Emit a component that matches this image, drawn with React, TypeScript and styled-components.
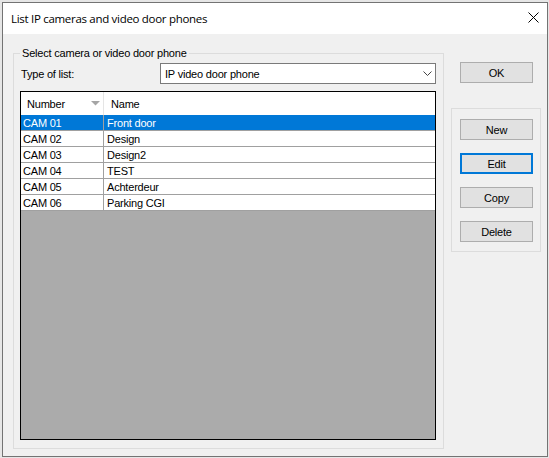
import styled, { createGlobalStyle, css } from 'styled-components';

interface Icamera {
    number: string;
    name: string;
}

const cameras: Icamera[] = [
    { number: 'CAM 01', name: 'Front door' },
    { number: 'CAM 02', name: 'Design' },
    { number: 'CAM 03', name: 'Design2' },
    { number: 'CAM 04', name: 'TEST' },
    { number: 'CAM 05', name: 'Achterdeur' },
    { number: 'CAM 06', name: 'Parking CGI' },
];

const GlobalStyle = createGlobalStyle`
    html, body {
        margin: 0;
        padding: 0;
        background: #e6e6e6;
    }
    body {
        font-family: 'Liberation Sans', Arial, sans-serif;
        font-size: 11px;
        letter-spacing: -0.2px;
        color: #000;
    }
`;

export default function App() {
    const selected = 0;
    return (
        <>
            <GlobalStyle />
            <Window>
                <TitleBar>
                    <Title>List IP cameras and video door phones</Title>
                    <CloseIcon width="11" height="11" viewBox="0 0 11 11">
                        <path d="M0.5 0.5 L10.5 10.5 M10.5 0.5 L0.5 10.5" stroke="#000" strokeWidth="1" />
                    </CloseIcon>
                </TitleBar>
                <Body>
                    <GroupBox>
                        <GroupLabel>Select camera or video door phone</GroupLabel>
                        <TypeRow>
                            <span className="label">Type of list:</span>
                            <Combo>
                                <span>IP video door phone</span>
                                <svg width="9" height="6" viewBox="0 0 9 6">
                                    <path d="M0.5 0.5 L4.5 4.5 L8.5 0.5" fill="none" stroke="#444" strokeWidth="1" />
                                </svg>
                            </Combo>
                        </TypeRow>
                        <ListView>
                            <HeaderRow>
                                <HeaderCell $first>
                                    Number
                                    <svg width="9" height="5" viewBox="0 0 9 5">
                                        <path d="M0 0 L9 0 L4.5 4.5 Z" fill="#a5a5a5" />
                                    </svg>
                                </HeaderCell>
                                <HeaderCell>Name</HeaderCell>
                            </HeaderRow>
                            {cameras.map((cam, i) => (
                                <ListRow key={cam.number} $selected={i === selected}>
                                    <Cell $first>{cam.number}</Cell>
                                    <Cell>{cam.name}</Cell>
                                </ListRow>
                            ))}
                        </ListView>
                    </GroupBox>
                    <SideColumn>
                        <DialogButton>OK</DialogButton>
                        <ButtonGroup>
                            <DialogButton>New</DialogButton>
                            <DialogButton $focused>Edit</DialogButton>
                            <DialogButton>Copy</DialogButton>
                            <DialogButton>Delete</DialogButton>
                        </ButtonGroup>
                    </SideColumn>
                </Body>
            </Window>
        </>
    );
}

const Window = styled.div`
    margin: 2px 0 0 2px;
    width: 546px;
    height: 455px;
    box-sizing: border-box;
    border: 1px solid #737373;
    background: #f0f0f0;
    display: flex;
    flex-direction: column;
`;

const TitleBar = styled.div`
    height: 31px;
    flex-shrink: 0;
    background: #fff;
    display: flex;
    align-items: center;
    justify-content: space-between;
    padding: 0 8px 0 8px;
`;

const Title = styled.span`
    font-family: 'Open Sans', 'Liberation Sans', sans-serif;
    font-size: 11.5px;
    letter-spacing: -0.3px;
    color: #000;
    margin-top: -1px;
`;

const CloseIcon = styled.svg`
    margin-top: -2px;
`;

const Body = styled.div`
    flex: 1;
    display: flex;
    padding: 19px 0 7px 10px;
    min-height: 0;
`;

const GroupBox = styled.div`
    position: relative;
    width: 431px;
    box-sizing: border-box;
    border: 1px solid #dcdcdc;
    padding: 9px 7px 8px 6px;
    display: flex;
    flex-direction: column;
    gap: 7px;
`;

const GroupLabel = styled.span`
    position: absolute;
    top: -7px;
    left: 6px;
    padding: 0 2px;
    line-height: 13px;
    background: #f0f0f0;
`;

const TypeRow = styled.div`
    display: flex;
    align-items: center;
    justify-content: space-between;

    & > .label {
        padding-left: 1px;
    }
`;

const Combo = styled.div`
    width: 276px;
    height: 21px;
    box-sizing: border-box;
    border: 1px solid #7a7a7a;
    background: #fff;
    display: flex;
    align-items: center;
    justify-content: space-between;
    padding: 0 3px 0 4px;
`;

const ListView = styled.div`
    flex: 1;
    border: 1px solid #000;
    background: #ababab;
    overflow: hidden;
`;

const HeaderRow = styled.div`
    height: 23px;
    display: flex;
    background: #fff;
`;

const HeaderCell = styled.div<{ $first?: boolean }>`
    display: flex;
    align-items: center;
    justify-content: space-between;
    ${props =>
        props.$first
            ? css`
                  width: 83px;
                  box-sizing: border-box;
                  padding: 0 3px 0 6px;
                  border-right: 1px solid #e5e5e5;
              `
            : css`
                  flex: 1;
                  padding-left: 7px;
              `}
`;

const ListRow = styled.div<{ $selected?: boolean }>`
    height: 15px;
    display: flex;
    background: #fff;
    border-bottom: 1px solid #a0a0a0;
    ${props =>
        props.$selected &&
        css`
            background: #0078d7;
            color: #fff;
        `}
`;

const Cell = styled.div<{ $first?: boolean }>`
    display: flex;
    align-items: center;
    white-space: nowrap;
    ${props =>
        props.$first
            ? css`
                  width: 83px;
                  box-sizing: border-box;
                  padding-left: 2px;
                  border-right: 1px solid #a0a0a0;
              `
            : css`
                  flex: 1;
                  padding-left: 3px;
              `}
`;

const SideColumn = styled.div`
    flex: 1;
    display: flex;
    flex-direction: column;
    align-items: flex-start;
    padding-top: 9px;
`;

const DialogButton = styled.button<{ $focused?: boolean }>`
    width: 73px;
    height: 21px;
    box-sizing: border-box;
    margin: 0 0 0 16px;
    padding: 0;
    background: #e1e1e1;
    border: 1px solid #adadad;
    font-family: 'Liberation Sans', Arial, sans-serif;
    font-size: 11px;
    letter-spacing: -0.2px;
    color: #000;
    ${props =>
        props.$focused &&
        css`
            border: 2px solid #0078d7;
        `}
`;

const ButtonGroup = styled.div`
    margin: 25px 0 0 7px;
    width: 90px;
    box-sizing: border-box;
    border: 1px solid #dcdcdc;
    padding: 10px 0 9px 8px;
    display: flex;
    flex-direction: column;
    gap: 13px;

    & > ${DialogButton} {
        margin-left: 0;
    }
`;
